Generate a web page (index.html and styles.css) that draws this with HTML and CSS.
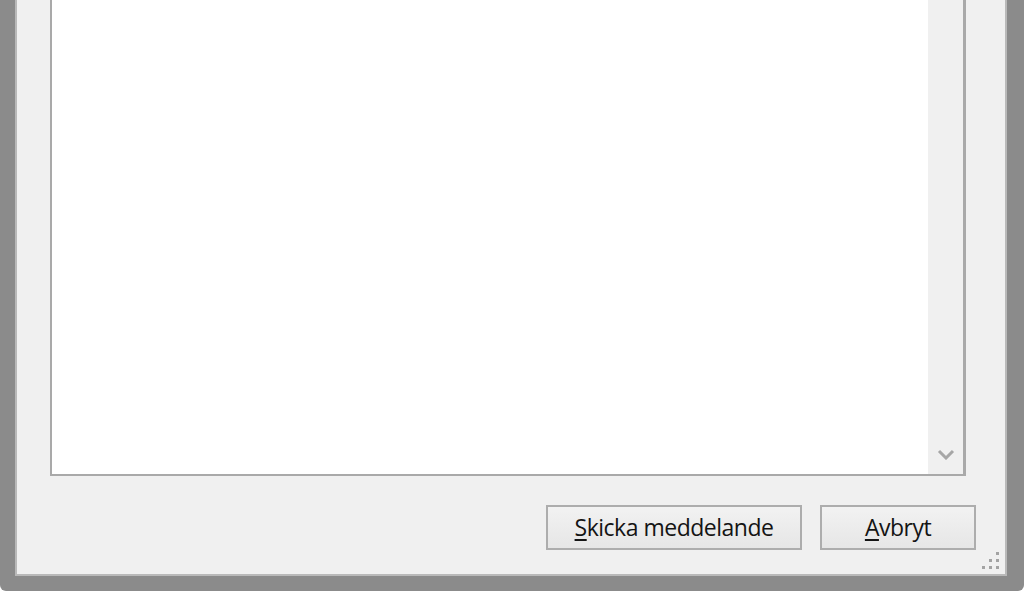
FILE: index.html
```html
<!DOCTYPE html>
<html lang="sv">
<head>
<meta charset="utf-8">
<title>Skicka meddelande</title>
<link rel="stylesheet" href="styles.css">
</head>
<body>
<div class="frame">
  <div class="panel">
    <div class="textbox">
      <div class="text-area"></div>
      <div class="scrollbar">
        <svg class="chevron" width="18" height="11" viewBox="0 0 18 11">
          <path d="M2 2 L9 9 L16 2" fill="none" stroke="#a6a6a6" stroke-width="3"/>
        </svg>
      </div>
    </div>
    <div class="buttons">
      <button class="btn btn-send"><span class="key">S</span>kicka meddelande</button>
      <button class="btn btn-cancel"><span class="key">A</span>vbryt</button>
    </div>
    <div class="grip">
      <span class="dot d1"></span>
      <span class="dot d2"></span><span class="dot d3"></span>
      <span class="dot d4"></span><span class="dot d5"></span><span class="dot d6"></span>
    </div>
  </div>
</div>
</body>
</html>
```
FILE: styles.css
```css
html, body {
  margin: 0;
  padding: 0;
  background: #ffffff;
}
body {
  width: 1024px;
  height: 595px;
  overflow: hidden;
  font-family: "Open Sans", "Noto Sans", sans-serif;
}
.frame {
  box-sizing: border-box;
  width: 1024px;
  height: 591px;
  background: #8b8b8b;
  padding: 0 17px 15px 15px;
  border-bottom-left-radius: 6px;
  border-bottom-right-radius: 6px;
}
.panel {
  position: relative;
  box-sizing: border-box;
  height: 576px;
  background: #f0f0f0;
  border: 2px solid #b9b9b9;
  border-top: none;
  padding: 0 29px 0 33px;
  display: flex;
  flex-direction: column;
}
.textbox {
  box-sizing: border-box;
  height: 476px;
  margin-right: 10px;
  border: 2px solid #a9a9a9;
  border-right-width: 3px;
  border-top: none;
  background: #ffffff;
  display: flex;
}
.text-area {
  flex: 1;
}
.scrollbar {
  width: 35px;
  background: #f0f0f0;
  display: flex;
  align-items: flex-end;
  justify-content: center;
  padding-bottom: 14px;
  box-sizing: border-box;
}
.chevron {
  display: block;
}
.buttons {
  margin-top: 29px;
  display: flex;
  justify-content: flex-end;
  gap: 18px;
}
.btn {
  box-sizing: border-box;
  height: 45px;
  border: 2px solid #adadad;
  background: linear-gradient(#f2f2f2, #e6e6e6);
  font-family: "Open Sans", "Noto Sans", sans-serif;
  font-size: 23px;
  letter-spacing: -0.5px;
  color: #141414;
  padding: 0 0 2px 0;
  margin: 0;
}
.btn-send {
  width: 256px;
}
.btn-cancel {
  width: 156px;
}
.key {
  text-decoration: underline;
  text-underline-offset: 3px;
  text-decoration-thickness: 2px;
}
.grip {
  position: absolute;
  right: 3px;
  bottom: 2px;
  width: 20px;
  height: 20px;
}
.dot {
  position: absolute;
  width: 3px;
  height: 3px;
  background: #a3a3a3;
}
.d1 { left: 14px; top: 0; }
.d2 { left: 7px; top: 7px; }
.d3 { left: 14px; top: 7px; }
.d4 { left: 0; top: 14px; }
.d5 { left: 7px; top: 14px; }
.d6 { left: 14px; top: 14px; }
```
